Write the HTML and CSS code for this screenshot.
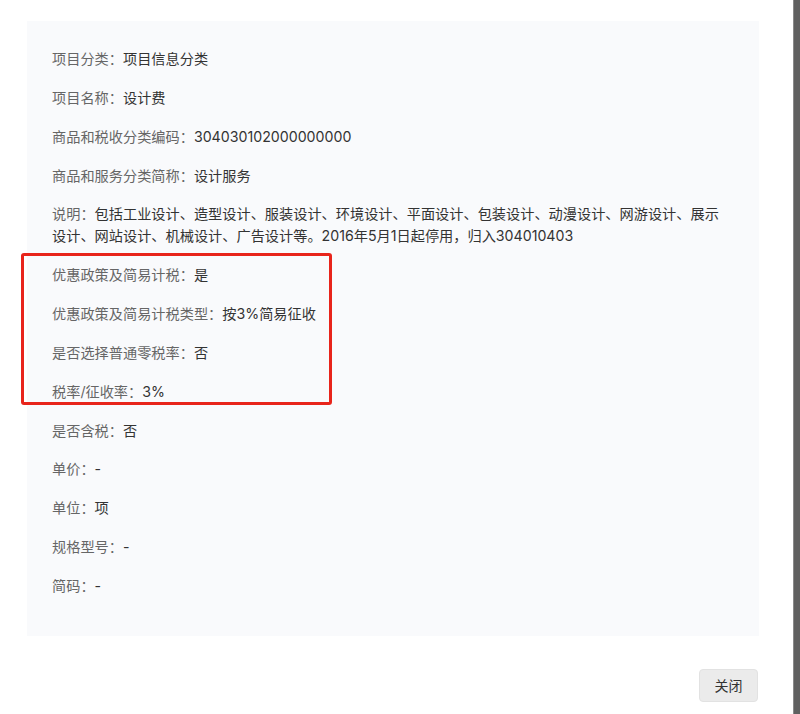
FILE: index.html
```html
<!DOCTYPE html>
<html>
<head>
    <meta charset="UTF-8">
    <meta name="viewport" content="width=device-width, initial-scale=1.0">
    <title>商品详情</title>
    <link rel="stylesheet" href="styles.css">
</head>
<body>
    <div class="dialog">
        <div class="detail-panel">
            <div class="item"><span class="label">项目分类：</span><span class="value">项目信息分类</span></div>
            <div class="item"><span class="label">项目名称：</span><span class="value">设计费</span></div>
            <div class="item"><span class="label">商品和税收分类编码：</span><span class="value">304030102000000000</span></div>
            <div class="item"><span class="label">商品和服务分类简称：</span><span class="value">设计服务</span></div>
            <div class="item desc"><span class="label">说明：</span><span class="value">包括工业设计、造型设计、服装设计、环境设计、平面设计、包装设计、动漫设计、网游设计、展示设计、网站设计、机械设计、广告设计等。2016年5月1日起停用，归入304010403</span></div>

            <div class="group">
                <span class="mark"></span>
                <div class="item"><span class="label">优惠政策及简易计税：</span><span class="value">是</span></div>
                <div class="item"><span class="label">优惠政策及简易计税类型：</span><span class="value">按3%简易征收</span></div>
                <div class="item"><span class="label">是否选择普通零税率：</span><span class="value">否</span></div>
                <div class="item"><span class="label">税率/征收率：</span><span class="value">3%</span></div>
            </div>

            <div class="item"><span class="label">是否含税：</span><span class="value">否</span></div>
            <div class="item"><span class="label">单价：</span><span class="value">-</span></div>
            <div class="item"><span class="label">单位：</span><span class="value">项</span></div>
            <div class="item"><span class="label">规格型号：</span><span class="value">-</span></div>
            <div class="item"><span class="label">简码：</span><span class="value">-</span></div>
        </div>
        <div class="footer">
            <button class="btn">关闭</button>
        </div>
    </div>
    <div class="mask-edge"></div>
</body>
</html>
```

FILE: styles.css
```css
* {
    margin: 0;
    padding: 0;
    box-sizing: border-box;
}

body {
    display: flex;
    height: 714px;
    overflow: hidden;
    background-color: #ffffff;
    font-family: Inter, "Noto Sans CJK SC", sans-serif;
    font-size: 14.2px;
}

.dialog {
    width: 793px;
    padding: 21px 34px 0 27px;
    background-color: #ffffff;
}

.detail-panel {
    display: flex;
    flex-direction: column;
    gap: 16.85px;
    width: 732px;
    padding: 27px 40px 39px 25px;
    background-color: #f9fafc;
}

.item {
    line-height: 22px;
}

.label {
    color: #666666;
}

.value {
    color: #333333;
}

.desc {
    width: 670px;
}

.group {
    position: relative;
    display: flex;
    flex-direction: column;
    gap: 16.85px;
}

.mark {
    position: absolute;
    top: -11px;
    left: -31px;
    width: 311px;
    height: 152px;
    border: 3px solid #e8241b;
    border-radius: 3px;
}

.footer {
    display: flex;
    justify-content: flex-end;
    margin-top: 33px;
    padding-right: 1px;
}

.btn {
    width: 59px;
    height: 33px;
    border: 1px solid #e2e2e2;
    border-radius: 4px;
    background-color: #ebebeb;
    color: #333333;
    font-family: inherit;
    font-size: 14px;
}

.mask-edge {
    flex: 1;
    background-color: #606060;
    border-left: 1px solid #8a8a8a;
}
```
